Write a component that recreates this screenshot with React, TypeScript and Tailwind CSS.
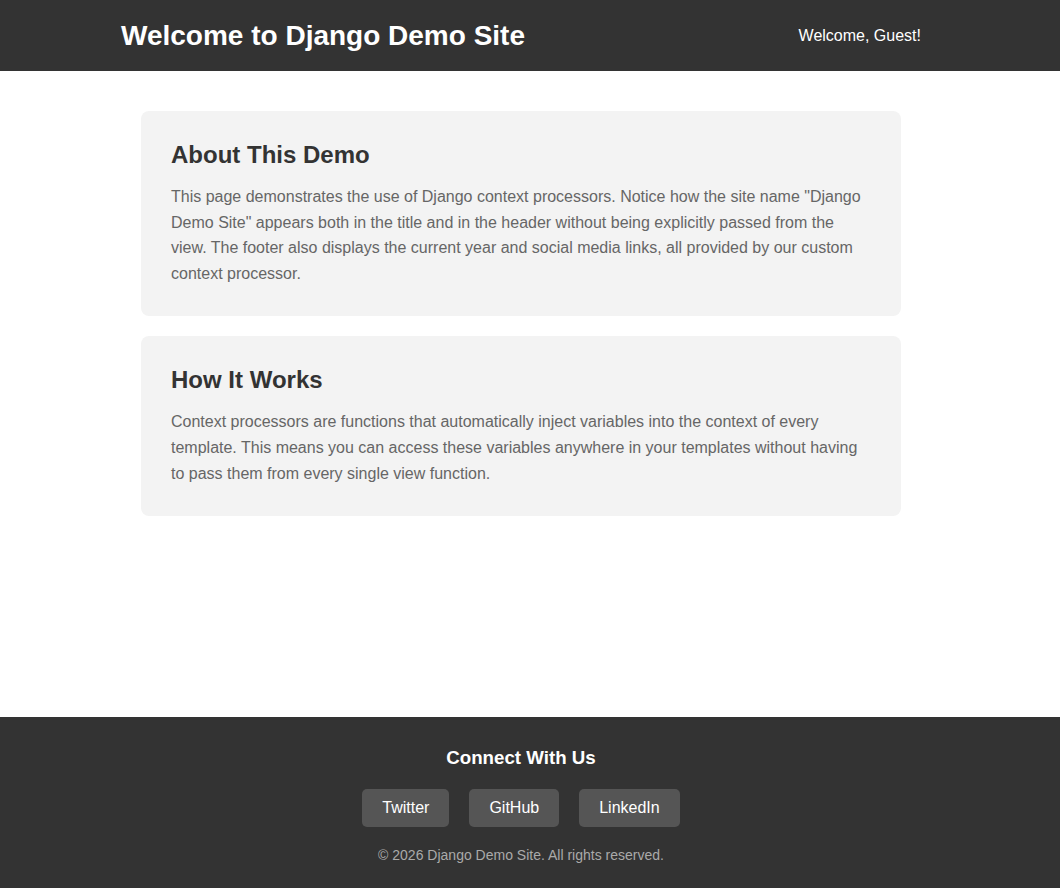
// App.tsx
const sections = [
  {
    title: "About This Demo",
    body: 'This page demonstrates the use of Django context processors. Notice how the site name "Django Demo Site" appears both in the title and in the header without being explicitly passed from the view. The footer also displays the current year and social media links, all provided by our custom context processor.',
  },
  {
    title: "How It Works",
    body: "Context processors are functions that automatically inject variables into the context of every template. This means you can access these variables anywhere in your templates without having to pass them from every single view function.",
  },
];

const socialLinks = ["Twitter", "GitHub", "LinkedIn"];

function App() {
  return (
    <div className="font-['Liberation_Sans',Arial,sans-serif] bg-white overflow-hidden h-[888px]">
      <header className="bg-[#333] text-white">
        <div className="w-[1042px]">
          <div className="max-w-[800px] mx-auto h-[71px] flex items-center justify-between">
            <h1 className="text-[28px] font-bold leading-none">
              Welcome to Django Demo Site
            </h1>
            <span className="text-base">Welcome, Guest!</span>
          </div>
        </div>
      </header>

      <main className="h-[646px]">
        <div className="w-[1042px]">
          <div className="max-w-[800px] mx-auto px-5 pt-10 flex flex-col gap-5">
            {sections.map((s) => (
              <section key={s.title} className="bg-[#f3f3f3] rounded-lg p-[30px]">
                <h2 className="text-2xl font-bold text-[#333] leading-[1.15] mb-[15.4px]">
                  {s.title}
                </h2>
                <p className="text-base text-[#666] leading-[1.6]">{s.body}</p>
              </section>
            ))}
          </div>
        </div>
      </main>

      <footer className="bg-[#333] text-white h-[171px]">
        <div className="w-[1042px] pt-[30px] flex flex-col items-center">
          <h3 className="text-[18.72px] font-bold leading-[1.15]">Connect With Us</h3>
          <div className="flex gap-5 mt-5">
            {socialLinks.map((l) => (
              <a
                key={l}
                href="#"
                className="bg-[#555] text-white rounded-[5px] px-5 py-2.5 text-base leading-[1.15]"
              >
                {l}
              </a>
            ))}
          </div>
          <p className="mt-5 text-sm text-[#aaa] leading-[1.15]">
            © 2026 Django Demo Site. All rights reserved.
          </p>
        </div>
      </footer>
    </div>
  );
}

export default App;
